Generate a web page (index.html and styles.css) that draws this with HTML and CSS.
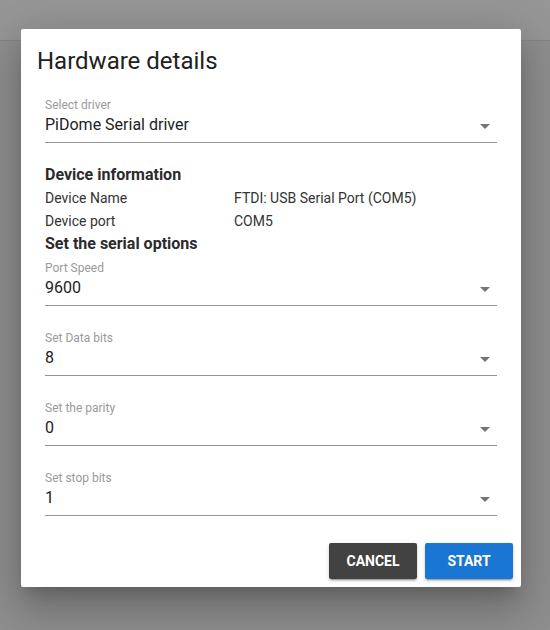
FILE: index.html
```html
<!DOCTYPE html>
<html>
<head>
<meta charset="utf-8">
<link rel="stylesheet" href="styles.css">
</head>
<body>
<div class="page">
  <div class="topbar"></div>
  <div class="backdrop"></div>
  <div class="dialog">
    <h2 class="dialog-title">Hardware details</h2>
    <div class="dialog-content">
      <div class="field">
        <div class="field-label">Select driver</div>
        <div class="field-value"><span>PiDome Serial driver</span><i class="arrow"></i></div>
      </div>
      <div class="section-title first">Device information</div>
      <div class="info-row"><span class="info-key">Device Name</span><span class="info-val">FTDI: USB Serial Port (COM5)</span></div>
      <div class="info-row"><span class="info-key">Device port</span><span class="info-val">COM5</span></div>
      <div class="section-title second">Set the serial options</div>
      <div class="field opt first-opt">
        <div class="field-label">Port Speed</div>
        <div class="field-value"><span>9600</span><i class="arrow"></i></div>
      </div>
      <div class="field opt">
        <div class="field-label">Set Data bits</div>
        <div class="field-value"><span>8</span><i class="arrow"></i></div>
      </div>
      <div class="field opt">
        <div class="field-label">Set the parity</div>
        <div class="field-value"><span>0</span><i class="arrow"></i></div>
      </div>
      <div class="field opt">
        <div class="field-label">Set stop bits</div>
        <div class="field-value"><span>1</span><i class="arrow"></i></div>
      </div>
    </div>
    <div class="dialog-actions">
      <button class="btn btn-cancel">Cancel</button>
      <button class="btn btn-start">Start</button>
    </div>
  </div>
</div>
</body>
</html>
```

FILE: styles.css
```css
* { box-sizing: border-box; }
html, body {
  margin: 0;
  padding: 0;
  width: 550px;
  height: 630px;
  overflow: hidden;
  font-family: Roboto, "Liberation Sans", sans-serif;
}
.page {
  position: relative;
  width: 550px;
  height: 630px;
  background: #8f8f8f;
}
.topbar {
  height: 41px;
  background: #969696;
  border-bottom: 1px solid #868686;
}
.dialog {
  position: absolute;
  left: 21px;
  top: 29px;
  width: 500px;
  background: #fff;
  border-radius: 2px;
  box-shadow: 0 11px 15px -7px rgba(0,0,0,.2), 0 24px 38px 3px rgba(0,0,0,.14), 0 9px 46px 8px rgba(0,0,0,.12);
}
.dialog-title {
  margin: 0;
  padding: 16px 16px 0;
  font-size: 24px;
  line-height: 32px;
  font-weight: 400;
  color: #212121;
}
.dialog-content {
  padding: 20px 24px 19px;
}
.field {
  border-bottom: 1px solid #949494;
  padding-bottom: 5px;
}
.field-label {
  font-size: 12px;
  line-height: 16px;
  color: #9a9a9a;
}
.field-value {
  display: flex;
  justify-content: space-between;
  align-items: center;
  font-size: 16px;
  line-height: 24px;
  color: #222;
}
.arrow {
  display: block;
  width: 0;
  height: 0;
  border-left: 5px solid transparent;
  border-right: 5px solid transparent;
  border-top: 5px solid #757575;
  margin-right: 7px;
  margin-top: 2px;
}
.section-title {
  font-size: 16px;
  font-weight: 700;
  color: #2b2b2b;
}
.section-title.first {
  margin-top: 20px;
  line-height: 24px;
}
.section-title.second {
  line-height: 22px;
}
.info-row {
  display: flex;
  font-size: 14px;
  line-height: 23px;
  color: #333;
}
.info-key {
  width: 189px;
  flex: none;
}
.field.opt {
  margin-top: 24px;
}
.field.opt.first-opt {
  margin-top: 5px;
}
.dialog-actions {
  display: flex;
  justify-content: flex-end;
  gap: 8px;
  padding: 8px;
}
.btn {
  width: 88px;
  height: 36px;
  border: none;
  border-radius: 2px;
  font-family: Roboto, "Liberation Sans", sans-serif;
  font-size: 14px;
  font-weight: 700;
  text-transform: uppercase;
  color: #fff;
  box-shadow: 0 3px 1px -2px rgba(0,0,0,.2), 0 2px 2px 0 rgba(0,0,0,.14), 0 1px 5px 0 rgba(0,0,0,.12);
  padding: 0;
}
.btn-cancel { background: #424242; }
.btn-start { background: #1976d2; }
```
